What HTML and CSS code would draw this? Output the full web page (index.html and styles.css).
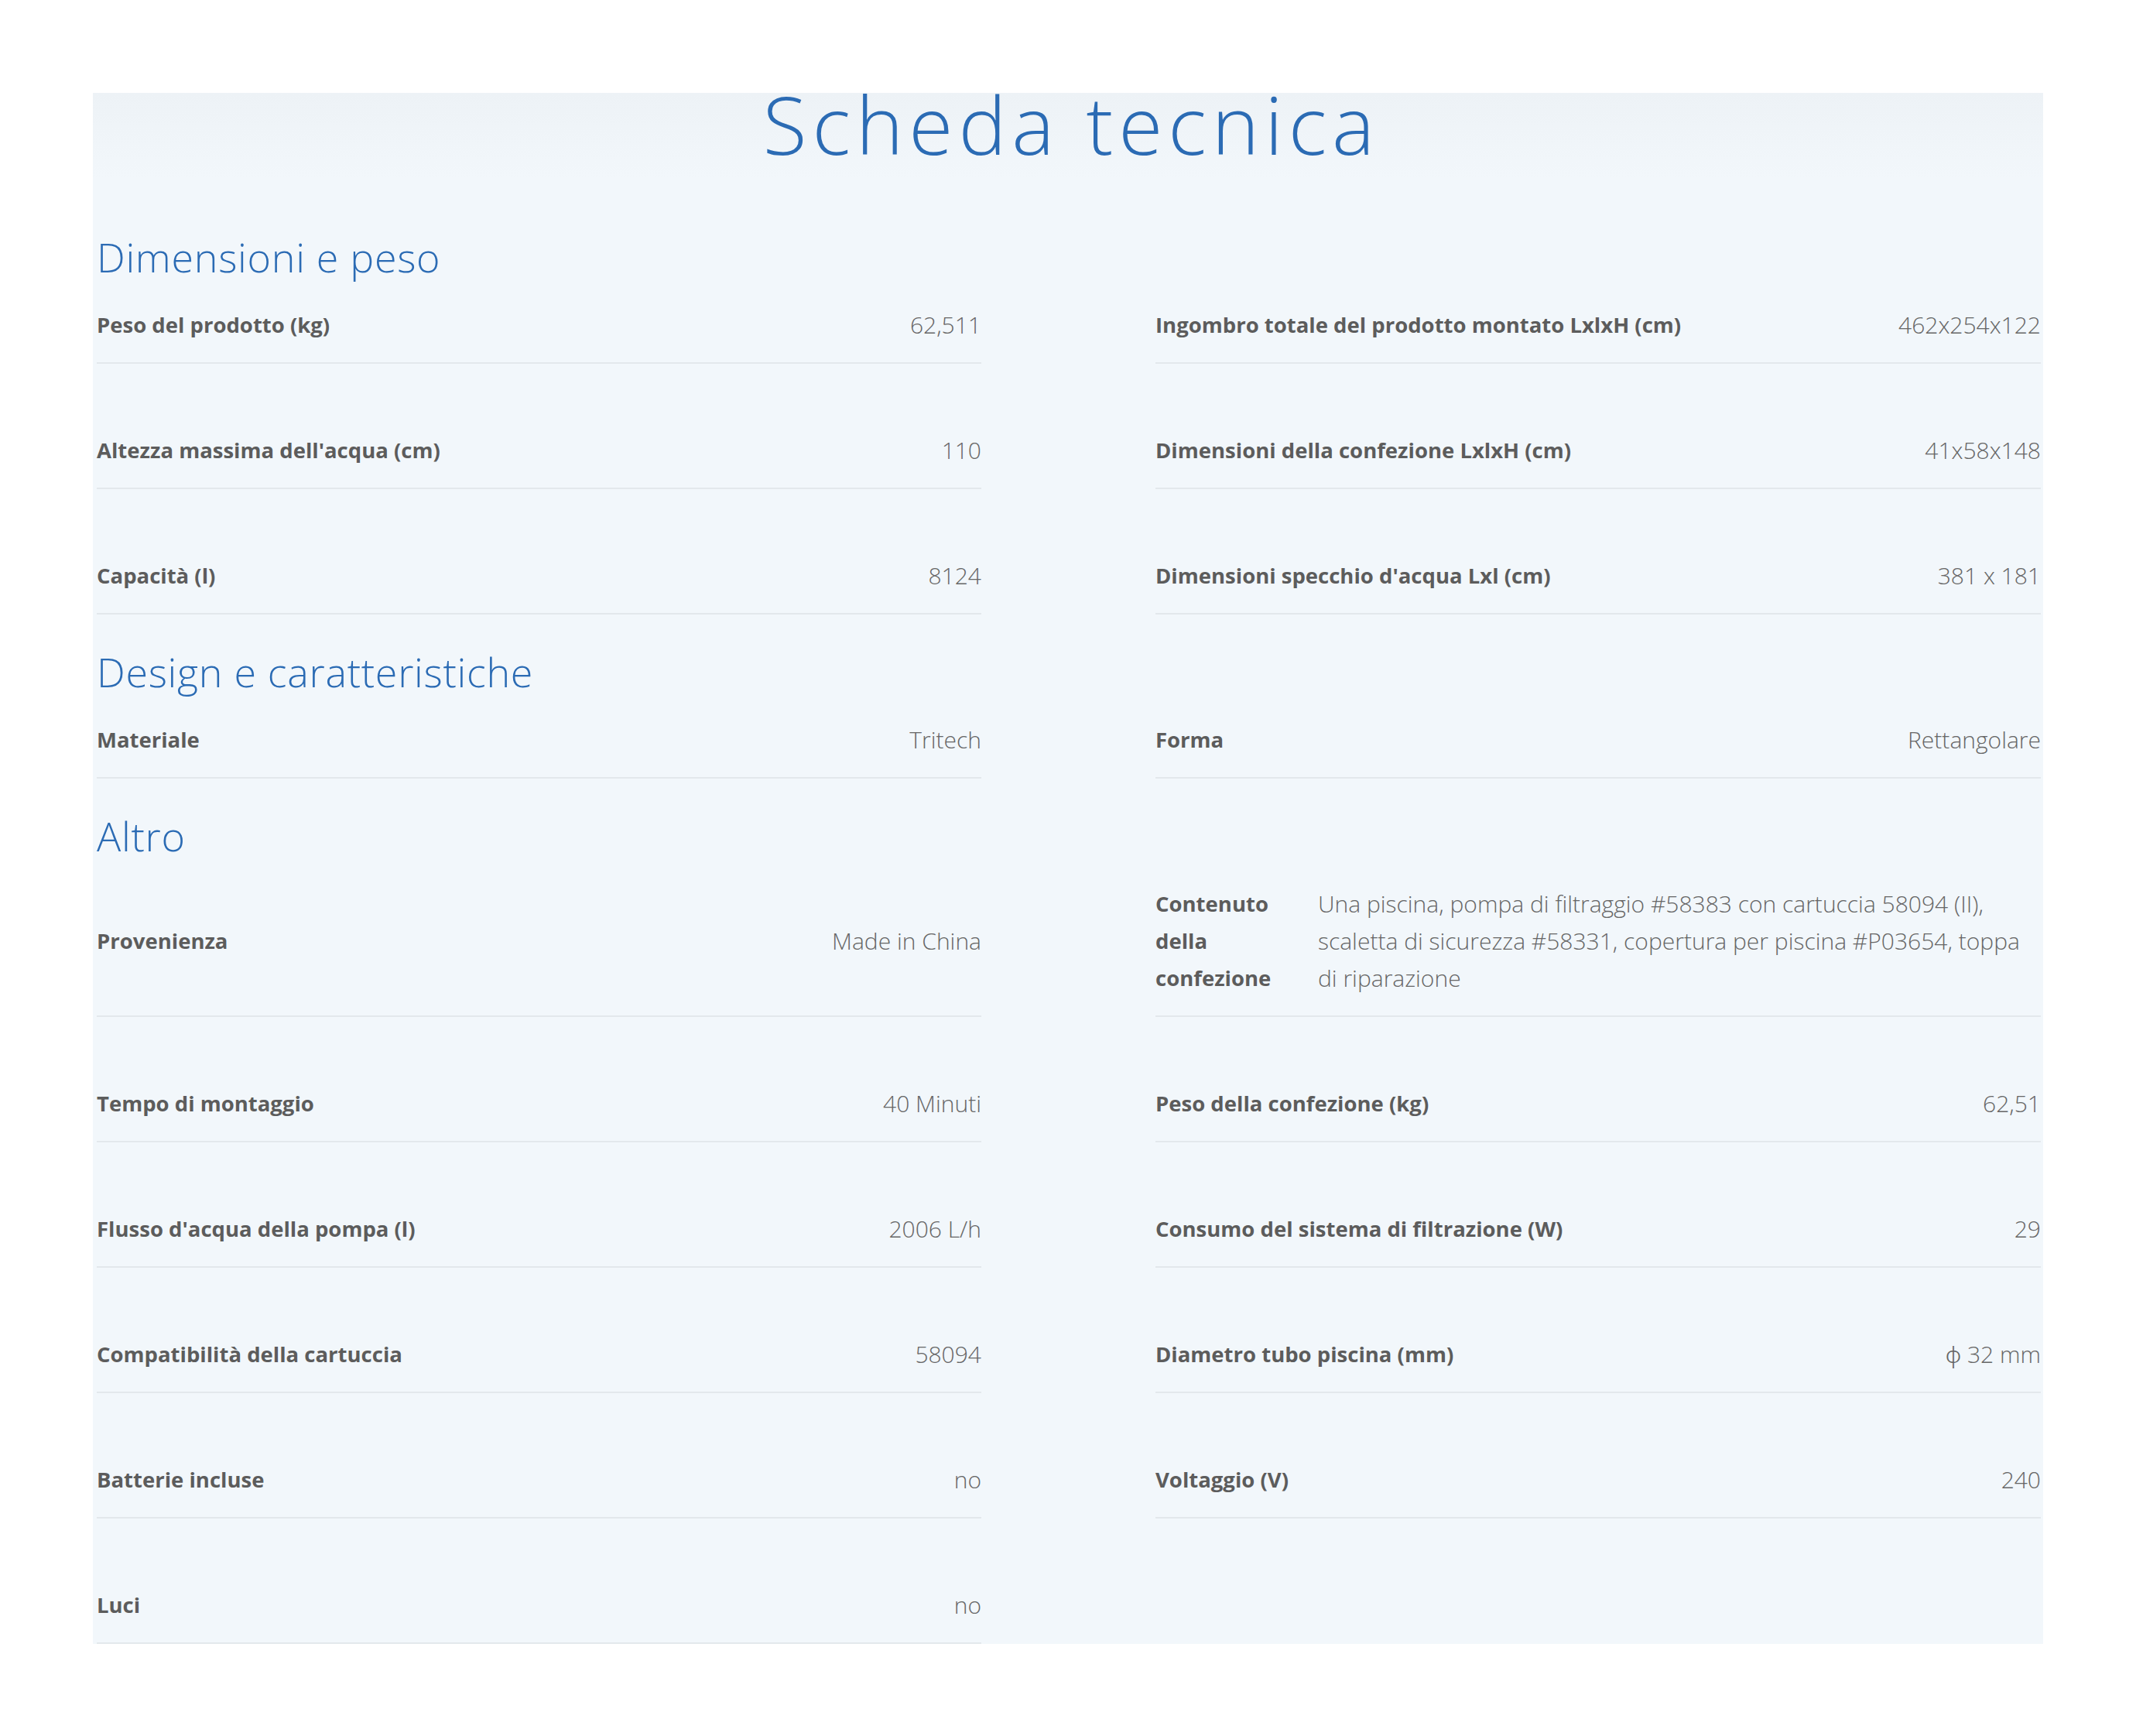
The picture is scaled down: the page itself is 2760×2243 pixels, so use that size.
FILE: index.html
```html
<!DOCTYPE html>
<html lang="it">
<head>
<meta charset="utf-8">
<title>Scheda tecnica</title>
<link rel="stylesheet" href="styles.css">
</head>
<body>
<div class="sheet">
  <h1 class="sheet-title">Scheda tecnica</h1>

  <section class="group">
    <h2 class="group-title">Dimensioni e peso</h2>
    <div class="specs">
      <div class="spec"><span class="spec-label">Peso del prodotto (kg)</span><span class="spec-value">62,511</span></div>
      <div class="spec"><span class="spec-label">Ingombro totale del prodotto montato LxlxH (cm)</span><span class="spec-value">462x254x122</span></div>
      <div class="spec"><span class="spec-label">Altezza massima dell'acqua (cm)</span><span class="spec-value">110</span></div>
      <div class="spec"><span class="spec-label">Dimensioni della confezione LxlxH (cm)</span><span class="spec-value">41x58x148</span></div>
      <div class="spec"><span class="spec-label">Capacità (l)</span><span class="spec-value">8124</span></div>
      <div class="spec"><span class="spec-label">Dimensioni specchio d'acqua Lxl (cm)</span><span class="spec-value">381 x 181</span></div>
    </div>
  </section>

  <section class="group">
    <h2 class="group-title">Design e caratteristiche</h2>
    <div class="specs">
      <div class="spec"><span class="spec-label">Materiale</span><span class="spec-value">Tritech</span></div>
      <div class="spec"><span class="spec-label">Forma</span><span class="spec-value">Rettangolare</span></div>
    </div>
  </section>

  <section class="group">
    <h2 class="group-title">Altro</h2>
    <div class="specs">
      <div class="spec"><span class="spec-label">Provenienza</span><span class="spec-value">Made in China</span></div>
      <div class="spec spec--long"><span class="spec-label">Contenuto della confezione</span><span class="spec-value">Una piscina, pompa di filtraggio #58383 con cartuccia 58094 (II), scaletta di sicurezza #58331, copertura per piscina #P03654, toppa di riparazione</span></div>
      <div class="spec"><span class="spec-label">Tempo di montaggio</span><span class="spec-value">40 Minuti</span></div>
      <div class="spec"><span class="spec-label">Peso della confezione (kg)</span><span class="spec-value">62,51</span></div>
      <div class="spec"><span class="spec-label">Flusso d'acqua della pompa (l)</span><span class="spec-value">2006 L/h</span></div>
      <div class="spec"><span class="spec-label">Consumo del sistema di filtrazione (W)</span><span class="spec-value">29</span></div>
      <div class="spec"><span class="spec-label">Compatibilità della cartuccia</span><span class="spec-value">58094</span></div>
      <div class="spec"><span class="spec-label">Diametro tubo piscina (mm)</span><span class="spec-value">ϕ 32 mm</span></div>
      <div class="spec"><span class="spec-label">Batterie incluse</span><span class="spec-value">no</span></div>
      <div class="spec"><span class="spec-label">Voltaggio (V)</span><span class="spec-value">240</span></div>
      <div class="spec"><span class="spec-label">Luci</span><span class="spec-value">no</span></div>
    </div>
  </section>
</div>
</body>
</html>
```
FILE: styles.css
```css
html, body {
  margin: 0;
  padding: 0;
  background: #ffffff;
}

body {
  font-family: "Open Sans", "Noto Sans", sans-serif;
}

.sheet {
  width: 2520px;
  box-sizing: border-box;
  margin: 120px auto;
  padding: 0 3px 0 5px;
  background: linear-gradient(#edf2f6 0, #f2f7fb 110px, #f2f7fb 100%);
}

.sheet-title {
  margin: 0;
  padding-left: 7px;
  font-size: 104px;
  line-height: 80px;
  font-weight: 300;
  letter-spacing: 7px;
  text-align: center;
  color: #2b6bb4;
}

.group {
  margin-top: 44px;
}

.sheet-title + .group {
  margin-top: 102px;
}

.group-title {
  margin: 0;
  font-size: 52px;
  line-height: 60px;
  font-weight: 300;
  letter-spacing: 0.7px;
  color: #2b6bb4;
}

.specs {
  display: grid;
  grid-template-columns: 1143px 1144px;
  column-gap: 225px;
  row-gap: 54px;
}

.spec {
  display: flex;
  align-items: center;
  justify-content: space-between;
  gap: 40px;
  padding: 34px 0 24px;
  border-bottom: 2px solid #e3e8ec;
  line-height: 48px;
}

.spec-label {
  font-size: 27.5px;
  font-weight: 700;
  color: #5c5c5c;
}

.spec-value {
  font-size: 30px;
  font-weight: 300;
  color: #666666;
  text-align: right;
}

.spec--long {
  align-items: flex-start;
}

.spec--long .spec-label {
  flex: 0 0 170px;
}

.spec--long .spec-value {
  flex: 1 1 auto;
  text-align: left;
}
```
